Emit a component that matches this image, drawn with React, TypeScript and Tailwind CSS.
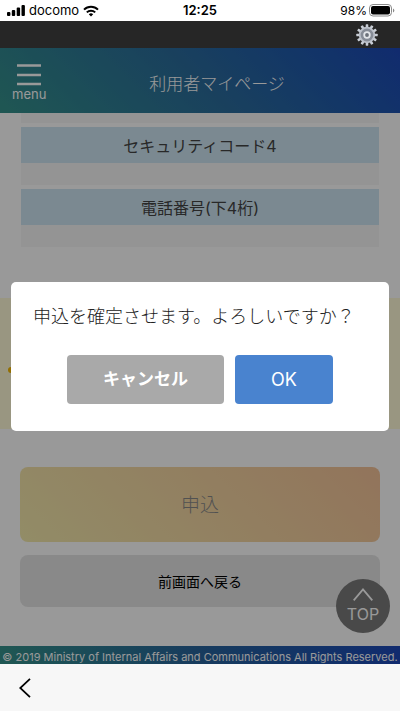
import type { ReactNode } from "react";

const StatusBar = () => {
  return (
    <div className="relative flex h-[21px] items-center justify-between bg-white pl-[7px] pr-[5px] text-[12px] leading-[21px] text-black">
      <div className="flex items-center gap-1">
        <svg width="18" height="11" viewBox="0 0 18 11" aria-hidden="true">
          <rect x="0" y="7" width="3.4" height="4" rx="1" />
          <rect x="4.8" y="5" width="3.4" height="6" rx="1" />
          <rect x="9.7" y="2.6" width="3.4" height="8.4" rx="1" />
          <rect x="14.5" y="0" width="3.4" height="11" rx="1" />
        </svg>
        <span className="text-[13px]">docomo</span>
        <svg width="16" height="12" viewBox="0 0 16 12" fill="none" stroke="black" strokeWidth="2" aria-hidden="true">
          <path d="M1 4.6a10 10 0 0 1 14 0" />
          <path d="M3.8 7.4a6 6 0 0 1 8.4 0" />
          <path d="M5.8 9.2a3.2 3.2 0 0 1 4.4 0L8 11.5z" fill="black" stroke="none" />
        </svg>
      </div>
      <span className="absolute inset-x-0 text-center text-[13px] font-semibold">12:25</span>
      <div className="flex items-center gap-[2px]">
        <span>98%</span>
        <svg width="26" height="13" viewBox="0 0 26 13" aria-hidden="true">
          <rect x="0.5" y="0.5" width="22" height="11.5" rx="3.5" fill="none" stroke="#8a8a8a" />
          <rect x="2" y="2" width="19" height="8.5" rx="2" />
          <path d="M24 4.5v4q1.3-.5 1.3-2t-1.3-2z" fill="#8a8a8a" />
        </svg>
      </div>
    </div>
  );
};

const teeth = [0, 30, 60, 90, 120, 150, 180, 210, 240, 270, 300, 330];

const GearIcon = () => {
  return (
    <svg width="22" height="22" viewBox="0 0 22 22" aria-hidden="true">
      {teeth.map((angle) => (
        <rect key={angle} x="9.7" y="0.3" width="2.6" height="4" rx="0.6" fill="#c9ced6" transform={`rotate(${angle} 11 11)`} />
      ))}
      <circle cx="11" cy="11" r="7.3" fill="#868c97" stroke="#bcc1ca" strokeWidth="1.8" />
      <circle cx="11" cy="11" r="2.8" fill="#6b717a" stroke="#e3e6ea" strokeWidth="1.8" />
    </svg>
  );
};

const Field = ({ children }: { children: ReactNode }) => {
  return (
    <div className="mt-1">
      <h2 className="h-9 bg-[#cde4f2] pt-px text-center text-[16px] leading-9 text-[#444]">{children}</h2>
      <div className="h-[22px] bg-[#f7f7f7]"></div>
    </div>
  );
};

export default function App() {
  return (
    <div className="min-h-screen bg-[#f7f7f7] font-['Inter','Noto_Sans_CJK_JP',sans-serif]">
      <StatusBar />
      <div className="flex h-[27px] items-center justify-end bg-[#262626] pr-[22px]">
        <button type="button" aria-label="設定">
          <GearIcon />
        </button>
      </div>

      <div className="relative bg-white">
        <header className="relative flex h-[65px] items-center justify-center bg-linear-45 from-[#35918a] via-[#2b6c9c] via-50% to-[#1d48b8]">
          <button type="button" className="absolute left-3 top-4 flex flex-col items-center text-[13px] leading-4 text-white">
            <svg width="24" height="22" viewBox="0 0 24 22" stroke="white" strokeWidth="2.5" aria-hidden="true">
              <path d="M0 1.5h24M0 11h24M0 20h24" />
            </svg>
            menu
          </button>
          <h1 className="ml-[34px] pt-2 text-[17px] font-light text-white">利用者マイページ</h1>
        </header>

        <main>
          <div className="mx-[21px]">
            <div className="h-[10px] bg-[#f7f7f7]"></div>
            <Field>セキュリティコード4</Field>
            <Field>電話番号(下4桁)</Field>
          </div>
          <div className="mt-[51px] flex h-[131px] items-center bg-[#fffbd8] pl-2 pt-3">
            <span className="h-[6px] w-[6px] rounded-full bg-[#f5b800]"></span>
          </div>
          <div className="mx-5 mt-[38px] flex flex-col gap-[13px] pb-[39px]">
            <button type="button" className="h-[75px] rounded-lg bg-linear-45 from-[#f3eaac] to-[#f3c298] pt-1 text-[19px] font-light text-[#888]">申込</button>
            <button type="button" className="h-[52px] rounded-lg bg-[#e5e5e5] text-[14px] text-black">前画面へ戻る</button>
          </div>
        </main>

        <footer className="h-[18px] whitespace-nowrap bg-linear-to-r from-[#35918a] via-[#27639c] to-[#1d48b8] pt-px text-center text-[11px] leading-5 text-white">
          © 2019 Ministry of Internal Affairs and Communications All Rights Reserved.
        </footer>

        <a href="#root" className="absolute bottom-[31px] right-[10px] flex h-[54px] w-[54px] flex-col items-center rounded-full bg-[#7a7a7a] pt-[9px] text-[16px] leading-5 text-white">
          <svg width="20" height="13" viewBox="0 0 20 13" fill="none" stroke="white" strokeWidth="1.8" aria-hidden="true">
            <path d="M0.7 12.3 10 1.5l9.3 10.8" />
          </svg>
          <span className="pt-[3px]">TOP</span>
        </a>

        <div className="absolute inset-0 bg-black/40 px-[11px] pt-[234px]">
          <div role="dialog" aria-modal="true" aria-labelledby="confirm-text" className="rounded-[5px] bg-white pb-[27px] pt-[21px]">
            <p id="confirm-text" className="px-[22px] text-[18px] font-light leading-7 text-[#222]">申込を確定させます。よろしいですか？</p>
            <div className="mt-6 flex justify-center gap-[11px]">
              <button type="button" className="h-[49px] w-[157px] rounded bg-[#a9a9a9] text-[17px] font-bold text-white">キャンセル</button>
              <button type="button" className="h-[49px] w-[98px] rounded bg-[#4983cf] text-[18px] text-white">OK</button>
            </div>
          </div>
        </div>
      </div>

      <nav className="flex h-[47px] items-center bg-[#f7f7f7] pl-[19px]">
        <button type="button" aria-label="戻る">
          <svg width="12" height="20" viewBox="0 0 12 20" fill="none" stroke="black" strokeWidth="1.8" aria-hidden="true">
            <path d="M11 0.8 1.2 10 11 19.2" />
          </svg>
        </button>
      </nav>
    </div>
  );
}
